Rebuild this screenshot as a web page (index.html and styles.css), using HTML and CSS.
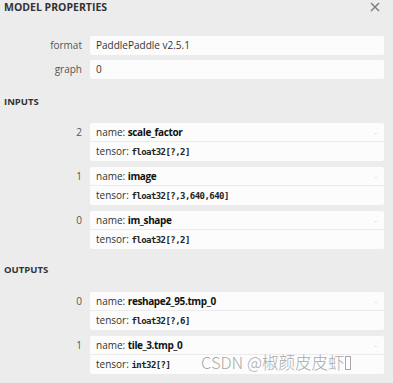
FILE: index.html
```html
<!DOCTYPE html>
<html>
<head>
<meta charset="utf-8">
<link rel="stylesheet" href="styles.css">
</head>
<body>
<div class="sidebar">
  <div class="header">
    <div class="title">MODEL PROPERTIES</div>
    <svg class="close" width="10" height="10" viewBox="0 0 10 10"><path d="M1 1 L9 9 M9 1 L1 9" stroke="#777" stroke-width="1.3" fill="none"/></svg>
  </div>
  <div class="props">
    <div class="row"><div class="label">format</div><div class="value">PaddlePaddle v2.5.1</div></div>
    <div class="row"><div class="label">graph</div><div class="value">0</div></div>
  </div>
  <div class="section first">INPUTS</div>
  <div class="args">
    <div class="arg"><div class="label">2</div><div class="box"><div class="line top"><span>name: <b>scale_factor</b></span><span class="dash">-</span></div><div class="line">tensor: <code>float32[?,2]</code></div></div></div>
    <div class="arg"><div class="label">1</div><div class="box"><div class="line top"><span>name: <b>image</b></span><span class="dash">-</span></div><div class="line">tensor: <code>float32[?,3,640,640]</code></div></div></div>
    <div class="arg"><div class="label">0</div><div class="box"><div class="line top"><span>name: <b>im_shape</b></span><span class="dash">-</span></div><div class="line">tensor: <code>float32[?,2]</code></div></div></div>
  </div>
  <div class="section">OUTPUTS</div>
  <div class="args">
    <div class="arg"><div class="label">0</div><div class="box"><div class="line top"><span>name: <b>reshape2_95.tmp_0</b></span><span class="dash">-</span></div><div class="line">tensor: <code>float32[?,6]</code></div></div></div>
    <div class="arg"><div class="label">1</div><div class="box"><div class="line top"><span>name: <b>tile_3.tmp_0</b></span><span class="dash">-</span></div><div class="line">tensor: <code>int32[?]</code></div></div></div>
  </div>
</div>
<div class="watermark">CSDN @椒颜皮皮虾<span class="tofu"></span></div>
</body>
</html>
```
FILE: styles.css
```css
html, body {
  margin: 0;
  padding: 0;
}
body {
  background: #ececec;
  font-family: "Open Sans", "Noto Sans", sans-serif;
  color: #333;
  width: 393px;
  height: 383px;
  overflow: hidden;
  position: relative;
}
.header {
  display: flex;
  justify-content: space-between;
  align-items: center;
  height: 14px;
  padding: 0 13px 0 4px;
}
.title {
  font-weight: 700;
  font-size: 10.5px;
  color: #333;
}
.close {
  display: block;
}
.props {
  margin-top: 22px;
  display: flex;
  flex-direction: column;
  gap: 5px;
}
.row, .arg {
  display: grid;
  grid-template-columns: 82px 294px;
  column-gap: 8px;
}
.label {
  text-align: right;
  font-size: 10px;
  line-height: 19px;
  color: #555;
}
.value {
  background: #fcfcfc;
  border-radius: 2px;
  height: 19px;
  line-height: 19px;
  padding-left: 6px;
  font-size: 10px;
  color: #333;
}
.section {
  font-weight: 700;
  font-size: 9.5px;
  height: 14px;
  line-height: 14px;
  padding-left: 4px;
  margin-top: 14px;
  margin-bottom: 15px;
}
.section.first {
  margin-top: 16px;
  margin-bottom: 14px;
}
.args {
  display: flex;
  flex-direction: column;
  gap: 6px;
}
.box {
  background: #fcfcfc;
  border-radius: 2px;
}
.line {
  height: 19px;
  line-height: 19px;
  padding-left: 6px;
  font-size: 10px;
  color: #333;
}
.line.top {
  display: flex;
  justify-content: space-between;
  border-bottom: 1px solid #ececec;
  height: 18px;
  line-height: 18px;
}
.line b {
  font-weight: 700;
  color: #111;
  letter-spacing: -0.4px;
}
.dash {
  color: #c8c8c8;
  padding-right: 7px;
  font-size: 8px;
}
code {
  font-family: "DejaVu Sans Mono", monospace;
  font-size: 9px;
  font-weight: 700;
  letter-spacing: -0.55px;
  color: #222;
}
.watermark {
  position: absolute;
  left: 201px;
  top: 350px;
  font-family: "Noto Sans CJK SC", sans-serif;
  font-size: 16.5px;
  font-weight: 300;
  color: rgba(140, 140, 140, 0.75);
  white-space: nowrap;
}
.tofu {
  display: inline-block;
  width: 4px;
  height: 12px;
  border: 1px solid rgba(140, 140, 140, 0.75);
  margin-left: 1px;
  vertical-align: -1px;
}
```
